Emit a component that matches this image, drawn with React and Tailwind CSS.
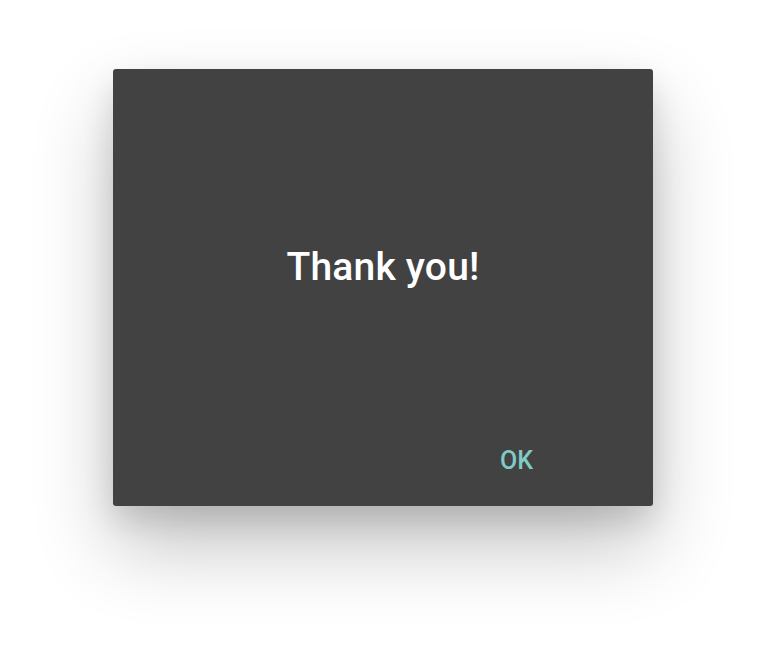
export default function App() {
  return (
    <div className="flex min-h-[664px] w-full justify-center bg-white pt-[69px]" style={{ fontFamily: 'Roboto, "Noto Sans", sans-serif' }}>
      <div className="flex h-[437px] w-[540px] flex-col rounded-[3px] bg-[#424242] shadow-[0_40px_80px_rgba(0,0,0,0.24),0_14px_30px_rgba(0,0,0,0.12)]">
        <div className="flex flex-1 items-center justify-center pt-[26px]">
          <h1 className="text-[39px] font-medium leading-[44px] tracking-[0.2px] text-white">Thank you!</h1>
        </div>
        <div className="flex justify-end pb-[23px] pr-[104px]">
          <button className="px-4 py-2 text-[25px] font-medium leading-[28px] text-[#80cbc4]">OK</button>
        </div>
      </div>
    </div>
  );
}
